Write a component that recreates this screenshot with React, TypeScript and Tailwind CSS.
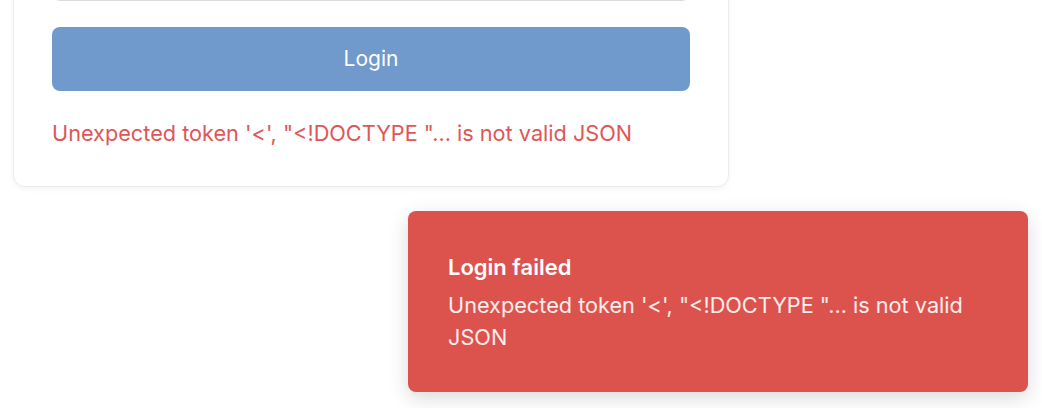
export default function App() {
  const msg = `Unexpected token '<', "<!DOCTYPE "... is not valid JSON`

  return (
    <div
      className="relative h-[408px] w-[1042px] overflow-hidden bg-white"
      style={{ fontFamily: 'Inter, "Noto Sans", sans-serif' }}
    >
      {/* login card, top part scrolled out of view */}
      <div className="ml-[13px] mt-[-84px] w-[716px] rounded-[12px] border border-[#ececec] bg-white px-[38px] pb-[39px] pt-[20px] shadow-[0_2px_6px_rgba(0,0,0,0.05)]">
        <div className="h-[64px] rounded-[8px] border border-[#dcdcdc] bg-white" />
        <button className="mt-[26px] flex h-[64px] w-full items-center justify-center rounded-[8px] bg-[#7099cc] text-[21px] text-white">
          Login
        </button>
        <p className="mt-[28px] text-[21.7px] leading-[28px] text-[#e05656]">{msg}</p>
      </div>

      {/* toast */}
      <div className="absolute left-[408px] top-[211px] w-[620px] rounded-[8px] bg-[#dc524d] px-[40px] pb-[39px] pt-[42px] text-white shadow-[0_6px_20px_rgba(0,0,0,0.15)]">
        <div className="text-[22px] font-semibold leading-[28px]">Login failed</div>
        <div className="mt-[8px] text-[21.7px] leading-[32px] text-white/90">{msg}</div>
      </div>
    </div>
  )
}
